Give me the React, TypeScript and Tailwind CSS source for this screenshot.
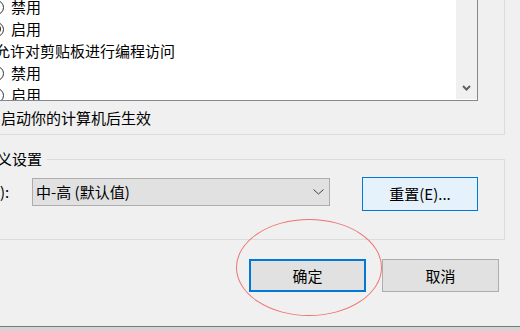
import React from "react";

const font = { fontFamily: '"Noto Sans CJK SC", "Noto Sans", sans-serif' };

function Radio({ checked }: { checked?: boolean }) {
    return (
        <span className="w-[15px] h-[15px] rounded-full border border-[#333333] bg-white flex items-center justify-center shrink-0">
            {checked && <span className="w-[8px] h-[8px] rounded-full bg-[#333333]" />}
        </span>
    );
}

function RadioRow({ label, checked }: { label: string; checked?: boolean }) {
    return (
        <div className="h-[22px] flex items-center gap-[7px] ml-[-11px]">
            <Radio checked={checked} />
            <span>{label}</span>
        </div>
    );
}

export default function App() {
    return (
        <div
            className="w-[520px] h-[331px] bg-[#f0f0f0] text-[15px] leading-[22px] text-black overflow-hidden relative flex flex-col"
            style={font}
        >
            {/* settings group (cut off) */}
            <div className="w-[505px] h-[135px] border-r border-b border-[#dcdcdc] flex flex-col shrink-0">
                <div className="w-[478px] h-[101px] bg-white border-r border-b border-[#828790] flex overflow-hidden">
                    <div className="flex-1 overflow-hidden">
                        <div className="mt-[-4px]">
                            <RadioRow label="禁用" />
                            <RadioRow label="启用" checked />
                            <div className="h-[22px] flex items-center ml-[-5px] whitespace-nowrap">允许对剪贴板进行编程访问</div>
                            <RadioRow label="禁用" />
                            <RadioRow label="启用" />
                        </div>
                    </div>
                    <div className="w-[21px] mb-px bg-[#f0f0f0] flex items-end justify-center pb-[8px]">
                        <svg width="9" height="6" viewBox="0 0 9 6">
                            <path d="M1 1 L4.5 4.5 L8 1" fill="none" stroke="#606060" strokeWidth="2" />
                        </svg>
                    </div>
                </div>
                <div className="flex-1 flex items-center ml-px whitespace-nowrap">启动你的计算机后生效</div>
            </div>

            {/* reset custom settings group */}
            <div className="w-[505px] h-[81px] mt-[24px] border-t border-r border-b border-[#dcdcdc] relative shrink-0">
                <span className="absolute left-[-3px] top-[-12px] bg-[#f0f0f0] pr-[5px] whitespace-nowrap">义设置</span>
                <div className="flex items-start pt-[17px]">
                    <span className="w-[32px] mt-px leading-[28px]">):</span>
                    <div className="w-[298px] h-[28px] mt-px bg-[#e1e1e1] border border-[#adadad] flex items-center justify-between pl-[3px] pr-[5px]">
                        <span className="whitespace-nowrap">中-高 (默认值)</span>
                        <svg width="11" height="6" viewBox="0 0 11 6">
                            <path d="M0.5 0.5 L5.5 5 L10.5 0.5" fill="none" stroke="#404040" strokeWidth="1" />
                        </svg>
                    </div>
                    <button className="w-[116px] h-[34px] ml-[32px] bg-[#e5f1fb] border border-[#0078d7] flex items-center justify-center">
                        重置(E)...
                    </button>
                </div>
            </div>

            {/* dialog buttons */}
            <div className="flex gap-[16px] ml-[249px] mt-[19px] shrink-0">
                <button className="w-[117px] h-[33px] bg-[#e1e1e1] border-2 border-[#0078d7] flex items-center justify-center">
                    确定
                </button>
                <button className="w-[117px] h-[33px] bg-[#e1e1e1] border border-[#adadad] flex items-center justify-center">
                    取消
                </button>
            </div>

            <div className="mt-auto h-[5px] bg-[#d4d4d4] border-t border-[#7a7a7a] shrink-0" />

            {/* red annotation circle */}
            <div className="absolute left-[236px] top-[219px] w-[146px] h-[97px] rounded-[50%] border border-[#f07272] pointer-events-none" />
        </div>
    );
}
